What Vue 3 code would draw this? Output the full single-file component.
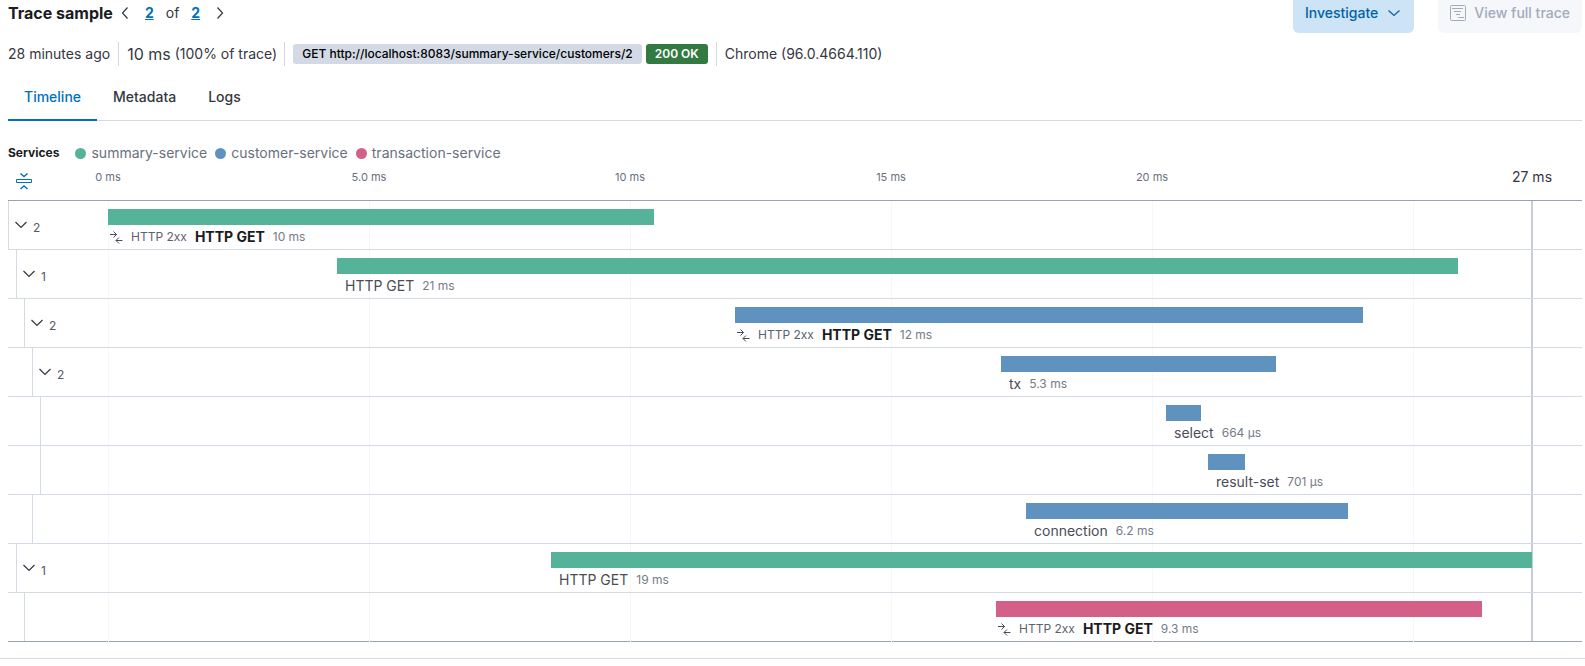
<script setup>
import { computed, ref } from 'vue'

const services = [
  { name: 'summary-service', tone: 'green' },
  { name: 'customer-service', tone: 'blue' },
  { name: 'transaction-service', tone: 'pink' },
]

const total = 1424
const tickStep = 261
const ticks = ['0 ms', '5.0 ms', '10 ms', '15 ms', '20 ms', ''].map((label, i) => ({
  label,
  left: pct(i * tickStep),
}))

const spans = [
  { level: 0, children: 2, start: 0, end: 546, tone: 'green', name: 'HTTP GET', status: 'HTTP 2xx', time: '10 ms' },
  { level: 1, children: 1, start: 229, end: 1350, tone: 'green', name: 'HTTP GET', time: '21 ms' },
  { level: 2, children: 2, start: 627, end: 1255, tone: 'blue', name: 'HTTP GET', status: 'HTTP 2xx', time: '12 ms' },
  { level: 3, children: 2, start: 893, end: 1168, tone: 'blue', name: 'tx', time: '5.3 ms' },
  { level: 4, children: 0, start: 1058, end: 1093, tone: 'blue', name: 'select', time: '664 μs' },
  { level: 4, children: 0, start: 1100, end: 1137, tone: 'blue', name: 'result-set', time: '701 μs' },
  { level: 3, children: 0, start: 918, end: 1240, tone: 'blue', name: 'connection', time: '6.2 ms' },
  { level: 1, children: 1, start: 443, end: 1424, tone: 'green', name: 'HTTP GET', time: '19 ms' },
  { level: 2, children: 0, start: 888, end: 1374, tone: 'pink', name: 'HTTP GET', status: 'HTTP 2xx', time: '9.3 ms' },
]

function pct(value) {
  return (value / total) * 100 + '%'
}

const collapsed = ref([])
const tab = ref('Timeline')

const visibleSpans = computed(() => {
  const out = []
  let hiddenBelow = Infinity
  spans.forEach((span, id) => {
    if (span.level > hiddenBelow) return
    hiddenBelow = collapsed.value.includes(id) ? span.level : Infinity
    out.push({ ...span, id })
  })
  return out
})

function toggle(id) {
  collapsed.value = collapsed.value.includes(id)
    ? collapsed.value.filter((other) => other !== id)
    : [...collapsed.value, id]
}

function toggleAll() {
  collapsed.value = collapsed.value.length ? [] : [0]
}
</script>

<template>
  <main class="panel">
    <header class="head">
      <h1>Trace sample</h1>
      <nav class="pager" aria-label="Trace samples">
        <button type="button" class="arrow" aria-label="Previous">
          <svg width="8" height="14" viewBox="0 0 8 14"><path d="M6.500 1.500 1.500 7l5 5.500" /></svg>
        </button>
        <a href="#first">2</a>
        <span>of</span>
        <a href="#last">2</a>
        <button type="button" class="arrow" aria-label="Next">
          <svg width="8" height="14" viewBox="0 0 8 14"><path d="m1.500 1.500 5 5.500-5 5.500" /></svg>
        </button>
      </nav>
      <div class="actions">
        <button type="button" class="btn primary">
          Investigate
          <svg width="16" height="16" viewBox="0 0 16 16"><path d="m2.500 5.500 5.500 5 5.500-5" /></svg>
        </button>
        <button type="button" class="btn" disabled>
          <svg width="16" height="16" viewBox="0 0 16 16">
            <rect x=".5" y=".5" width="15" height="15" rx="1" />
            <path d="M2 3.500h11M4 6.500h7M6 9.500h4M8 12.500h6" />
          </svg>
          View full trace
        </button>
      </div>
    </header>

    <div class="meta">
      <span class="cell">28 minutes ago</span>
      <span class="cell duration"><span class="big">10 ms</span> (100% of trace)</span>
      <span class="cell">
        <span class="badge">GET http://localhost:8083/summary-service/customers/2</span>
        <span class="badge ok">200 OK</span>
      </span>
      <span class="cell">Chrome (96.0.4664.110)</span>
    </div>

    <div class="tabs" role="tablist">
      <button
        v-for="name in ['Timeline', 'Metadata', 'Logs']"
        :key="name"
        type="button"
        role="tab"
        :aria-selected="tab === name"
        :class="{ active: tab === name }"
        @click="tab = name"
      >
        {{ name }}
      </button>
    </div>

    <div class="legend">
      <h2>Services</h2>
      <span v-for="s in services" :key="s.name" class="service">
        <i class="dot" :class="s.tone"></i>{{ s.name }}
      </span>
    </div>

    <section class="waterfall">
      <div class="axis">
        <button type="button" class="fold" aria-label="Collapse all" @click="toggleAll">
          <svg width="16" height="17" viewBox="0 0 16 17">
            <path d="M.5 6.500h15v3H.5z" />
            <path class="bold" d="m4.500.5 3.500 3 3.500-3M4.500 16l3.500-3 3.500 3" />
          </svg>
        </button>
        <div class="scale">
          <span v-for="t in ticks" :key="t.left" class="tick" :style="{ left: t.left }">{{ t.label }}</span>
          <span class="tick end">27 ms</span>
        </div>
      </div>

      <div class="chart">
        <div class="grid">
          <i v-for="t in ticks" :key="t.left" class="line" :style="{ left: t.left }"></i>
          <i class="line end"></i>
        </div>
        <div v-for="span in visibleSpans" :key="span.id" class="row">
          <div class="gutter" :class="'level-' + span.level">
            <button
              v-if="span.children"
              type="button"
              class="toggle"
              :class="{ closed: collapsed.includes(span.id) }"
              :aria-expanded="!collapsed.includes(span.id)"
              @click="toggle(span.id)"
            >
              <svg width="12" height="8" viewBox="0 0 12 8"><path d="m.5 1 5.500 5.500L11.500 1" /></svg>
              <span>{{ span.children }}</span>
            </button>
          </div>
          <div class="track">
            <div
              class="bar"
              :class="span.tone"
              :style="{ marginLeft: pct(span.start), width: pct(span.end - span.start) }"
            ></div>
            <div class="text" :class="{ transaction: span.status }" :style="{ marginLeft: pct(span.start) }">
              <template v-if="span.status">
                <svg width="13" height="13" viewBox="0 0 13 13">
                  <path d="M0 3.500h6.500M3.500.5l3 3-3 3M12.500 9.500H6M9 6.500l-3 3 3 3" />
                </svg>
                <span class="small status">{{ span.status }}</span>
                <strong>{{ span.name }}</strong>
              </template>
              <span v-else>{{ span.name }}</span>
              <span class="small">{{ span.time }}</span>
            </div>
          </div>
        </div>
      </div>
    </section>
  </main>
</template>

<style>
body {
  background: #fff;
}
</style>

<style scoped>
* {
  box-sizing: border-box;
}

.panel {
  overflow: hidden;
  padding: 0 3px 16px 8px;
  border-bottom: 1px solid #d3dae6;
  color: #343741;
  font: 14px/20px Inter, "Liberation Sans", sans-serif;
}

button {
  margin: 0;
  padding: 0;
  border: 0;
  background: none;
  color: inherit;
  font: inherit;
  cursor: pointer;
}

svg {
  display: block;
  flex: none;
  fill: none;
  stroke: currentColor;
}

.head {
  display: flex;
  align-items: center;
  height: 40px;
  margin-top: -7px;
}

h1 {
  margin: 0;
  color: #1a1c21;
  font-size: 16px;
  font-weight: 700;
  line-height: 24px;
}

.pager {
  display: flex;
  align-items: center;
  gap: 12px;
  margin-left: 8px;
}

.pager a {
  color: #0071c2;
  font-weight: 700;
  text-decoration: underline;
}

.arrow {
  padding: 0 4px 0 0;
}

.arrow:last-child {
  padding: 0 0 0 4px;
}

.pager svg,
.btn.primary svg,
.toggle svg {
  stroke-width: 1.2;
}

.actions {
  display: flex;
  gap: 24px;
  margin-left: auto;
}

.btn {
  display: flex;
  align-items: center;
  gap: 8px;
  height: 40px;
  padding: 0 12px;
  border-radius: 6px;
  background: #f5f7fa;
  color: #a2abba;
  font-weight: 500;
}

.btn.primary {
  background: #cce4f5;
  color: #0061a6;
}

.meta {
  display: flex;
  align-items: center;
  height: 26px;
  margin-top: 8px;
  white-space: nowrap;
}

.cell {
  display: flex;
  align-items: center;
  gap: 4px;
  height: 24px;
  padding-right: 8px;
}

.cell + .cell {
  padding-left: 8px;
  border-left: 1px solid #d3dae6;
}

.cell.duration {
  padding-right: 7px;
}

.big {
  font-size: 16px;
}

.badge {
  padding: 0 9px;
  border-radius: 3px;
  background: #d3dae6;
  color: #000;
  font-size: 12px;
  font-weight: 500;
  line-height: 20px;
}

.badge.ok {
  background: #327a42;
  color: #fff;
  font-weight: 600;
}

.tabs {
  display: flex;
  height: 46px;
  margin-top: 8px;
  box-shadow: inset 0 -1px #d3dae6;
}

.tabs button {
  padding: 0 16px;
  border-bottom: 2px solid transparent;
  color: #343741;
  font-weight: 500;
}

.tabs .active {
  border-color: #0071c2;
  color: #0071c2;
}

.legend {
  display: flex;
  align-items: center;
  height: 20px;
  margin-top: 22px;
  color: #69707d;
}

h2 {
  margin: 0 8px 0 0;
  color: #1a1c21;
  font-size: 12px;
  font-weight: 700;
  line-height: 20px;
}

.service {
  display: flex;
  align-items: center;
  gap: 5px;
  margin-left: 8px;
}

.dot {
  width: 11px;
  height: 11px;
  border-radius: 50%;
}

.green {
  background: #54b399;
}

.blue {
  background: #6092c0;
}

.pink {
  background: #d36086;
}

.axis {
  display: flex;
  align-items: flex-start;
  height: 37px;
  padding-right: 50px;
}

.fold {
  width: 100px;
  padding: 10px 0 0 8px;
  color: #0071c2;
}

.fold .bold {
  stroke-width: 1.4;
}

.scale {
  position: relative;
  flex: 1;
  height: 28px;
}

.tick {
  position: absolute;
  top: 4px;
  color: #69707d;
  font-size: 11px;
  white-space: nowrap;
  transform: translateX(-50%);
}

.tick.end {
  left: 100%;
  color: #343741;
  font-size: 14px;
}

.chart {
  position: relative;
  border-top: 1px solid #98a2b3;
  border-bottom: 1px solid #98a2b3;
}

.grid {
  position: absolute;
  inset: 0 50px -1px 100px;
}

.line {
  position: absolute;
  top: 0;
  bottom: 0;
  width: 1px;
  background: #f5f7fa;
}

.line.end {
  left: 100%;
  bottom: 1px;
  width: 2px;
  margin-left: -1px;
  background: #c9cdd9;
}

.row {
  position: relative;
  display: flex;
  height: 49px;
  padding-right: 50px;
  border-bottom: 1px solid #d3dae6;
}

.row:last-child {
  height: 48px;
  border-bottom: 0;
}

.gutter {
  flex: none;
  width: 100px;
}

.gutter::before {
  content: "";
  float: left;
  height: 100%;
  border-left: 1px solid #d3dae6;
}

.level-1 {
  padding-left: 8px;
}

.level-2 {
  padding-left: 16px;
}

.level-3 {
  padding-left: 24px;
}

.level-4 {
  padding-left: 32px;
}

.toggle {
  display: flex;
  align-items: center;
  gap: 6px;
  height: 48px;
  padding-left: 6px;
  font-size: 12px;
}

.toggle span {
  padding-top: 6px;
  color: #535966;
}

.toggle.closed svg {
  transform: rotate(-90deg);
}

.track {
  flex: 1;
  min-width: 0;
  padding-top: 8px;
}

.bar {
  height: 16px;
}

.text {
  display: flex;
  align-items: center;
  gap: 8px;
  margin-top: 2px;
  padding-left: 8px;
  color: #4a4d57;
  white-space: nowrap;
}

.text.transaction {
  padding-left: 2px;
}

.small {
  color: #757b88;
  font-size: 12px;
}

.status {
  color: #5c616d;
}

strong {
  color: #1a1c21;
  font-weight: 700;
}
</style>
